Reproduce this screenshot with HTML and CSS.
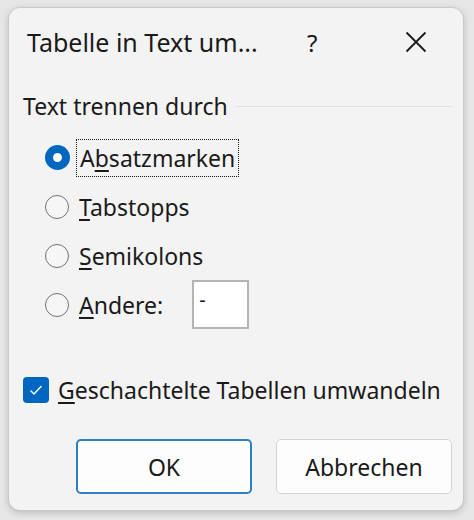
FILE: index.html
```html
<!DOCTYPE html>
<html lang="de">
<head>
<meta charset="utf-8">
<title>Tabelle in Text umwandeln</title>
<link rel="stylesheet" href="styles.css">
</head>
<body>
<div class="dialog">
  <div class="titlebar">
    <div class="title">Tabelle in Text um...</div>
    <div class="help">?</div>
    <div class="close">
      <svg width="22" height="22" viewBox="0 0 22 22"><path d="M1.5 1.5 L20.5 20.5 M20.5 1.5 L1.5 20.5" stroke="#1a1a1a" stroke-width="1.8" fill="none"/></svg>
    </div>
  </div>
  <div class="content">
    <div class="group-header"><span class="group-title">Text trennen durch</span><span class="group-line"></span></div>
    <div class="options">
      <div class="option"><span class="radio checked"></span><span class="label focused">A<u>b</u>satzmarken</span></div>
      <div class="option"><span class="radio"></span><span class="label"><u>T</u>abstopps</span></div>
      <div class="option"><span class="radio"></span><span class="label"><u>S</u>emikolons</span></div>
      <div class="option"><span class="radio"></span><span class="label"><u>A</u>ndere:</span><span class="textbox">-</span></div>
    </div>
    <div class="check-row"><span class="checkbox"><svg width="14" height="12" viewBox="0 0 14 12"><path d="M1.5 6.5 L5 10 L12.5 2" stroke="#ffffff" stroke-width="1.4" fill="none"/></svg></span><span class="label"><u>G</u>eschachtelte Tabellen umwandeln</span></div>
    <div class="buttons">
      <div class="btn primary">OK</div>
      <div class="btn">Abbrechen</div>
    </div>
  </div>
</div>
</body>
</html>
```
FILE: styles.css
```css
html, body {
  margin: 0;
  padding: 0;
}
body {
  background: #e6e6e6;
  width: 474px;
  height: 520px;
  overflow: hidden;
  font-family: "Noto Sans", "Open Sans", sans-serif;
  color: #1a1a1a;
}
.dialog {
  margin: 7px 0 0 8px;
  width: 456px;
  height: 504px;
  box-sizing: border-box;
  background: #f3f3f3;
  border: 1px solid #c9c9c9;
  border-radius: 12px;
  box-shadow: 0 2px 6px rgba(0,0,0,0.18);
  display: flex;
  flex-direction: column;
}
.titlebar {
  height: 68px;
  display: flex;
  align-items: center;
  padding-left: 18px;
}
.title {
  font-size: 25px;
  width: 280px;
  white-space: nowrap;
}
.help {
  font-size: 24px;
  width: 98px;
}
.close {
  display: flex;
  align-items: center;
}
.content {
  padding: 0 11px 0 14px;
  display: flex;
  flex-direction: column;
  font-size: 23px;
}
.group-header {
  margin-top: 15px;
  height: 30px;
  display: flex;
  align-items: center;
  gap: 8px;
}
.group-line {
  flex: 1;
  height: 1px;
  background: #e0e0e0;
}
.options {
  padding-top: 12px;
  padding-left: 22px;
  display: flex;
  flex-direction: column;
}
.option {
  height: 49px;
  display: flex;
  align-items: center;
}
.radio {
  width: 22px;
  height: 22px;
  border: 1.5px solid #727272;
  border-radius: 50%;
  background: #f6f6f6;
  margin-right: 7px;
  flex: none;
}
.radio.checked {
  width: 9px;
  height: 9px;
  border: 8px solid #0067c0;
  background: #ffffff;
}
.label {
  padding: 2px 3px;
  white-space: nowrap;
}
.label u {
  text-decoration-thickness: 1.5px;
  text-underline-offset: 3px;
}
.label.focused {
  outline: 1px dotted #1a1a1a;
  outline-offset: 0;
}
.textbox {
  margin-left: 26px;
  width: 57px;
  height: 49px;
  background: #ffffff;
  border: 2px solid #b4b4b4;
  font-size: 20px;
  line-height: 36px;
  padding-left: 5px;
  box-sizing: border-box;
}
.check-row {
  margin-top: 41px;
  height: 40px;
  display: flex;
  align-items: center;
}
.checkbox {
  width: 26px;
  height: 26px;
  border-radius: 4px;
  background: #0067c0;
  display: flex;
  align-items: center;
  justify-content: center;
  margin-right: 6px;
  flex: none;
}
.buttons {
  margin-top: 29px;
  display: flex;
  justify-content: flex-end;
  gap: 24px;
}
.btn {
  width: 176px;
  height: 55px;
  box-sizing: border-box;
  background: #fdfdfd;
  border: 1px solid #d4d4d4;
  border-radius: 5px;
  display: flex;
  align-items: center;
  justify-content: center;
  font-size: 23px;
}
.btn.primary {
  border: 2px solid #2f7fc7;
}
```
